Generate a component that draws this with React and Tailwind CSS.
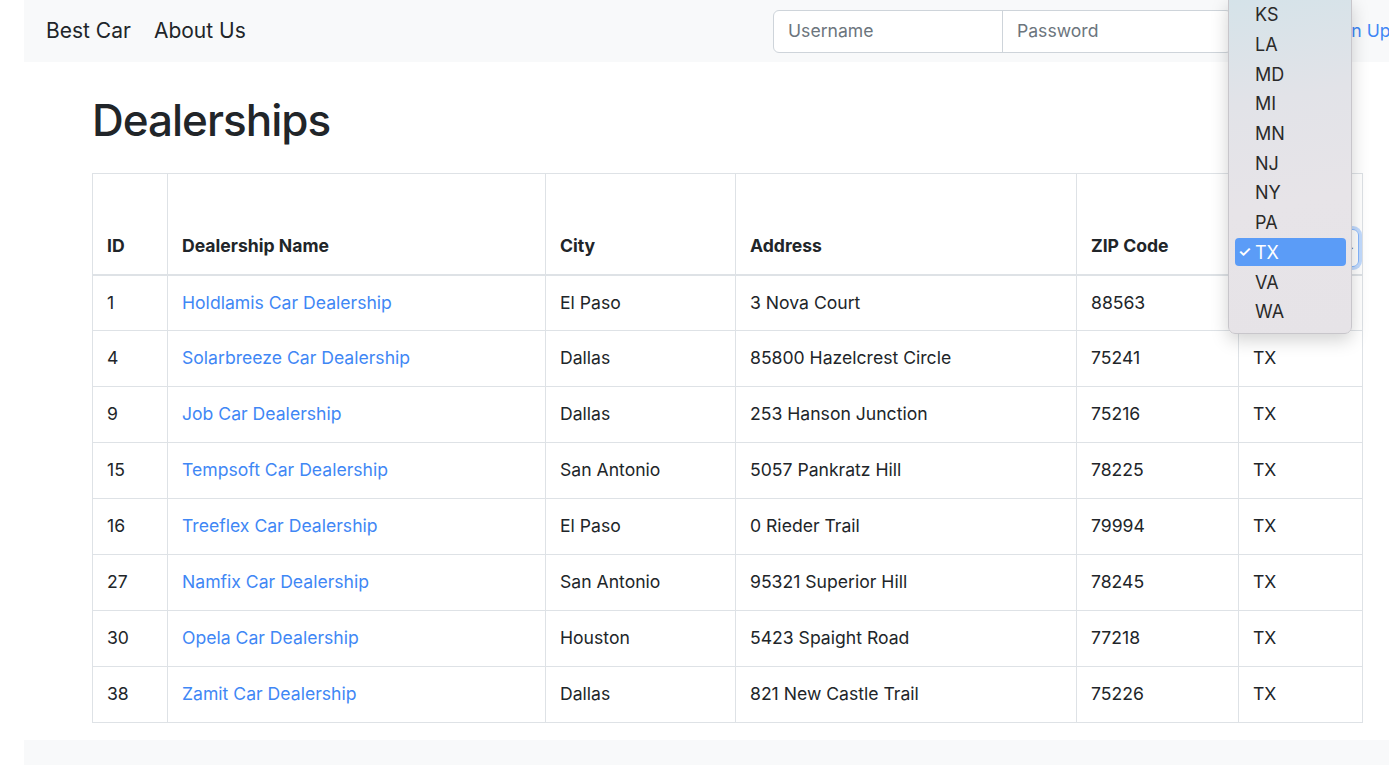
import React from "react";

const rows = [
  ["1", "Holdlamis Car Dealership", "El Paso", "3 Nova Court", "88563", "TX"],
  ["4", "Solarbreeze Car Dealership", "Dallas", "85800 Hazelcrest Circle", "75241", "TX"],
  ["9", "Job Car Dealership", "Dallas", "253 Hanson Junction", "75216", "TX"],
  ["15", "Tempsoft Car Dealership", "San Antonio", "5057 Pankratz Hill", "78225", "TX"],
  ["16", "Treeflex Car Dealership", "El Paso", "0 Rieder Trail", "79994", "TX"],
  ["27", "Namfix Car Dealership", "San Antonio", "95321 Superior Hill", "78245", "TX"],
  ["30", "Opela Car Dealership", "Houston", "5423 Spaight Road", "77218", "TX"],
  ["38", "Zamit Car Dealership", "Dallas", "821 New Castle Trail", "75226", "TX"],
];

const states = ["KS", "LA", "MD", "MI", "MN", "NJ", "NY", "PA", "TX", "VA", "WA"];

const widths = ["w-[75px]", "w-[378px]", "w-[190px]", "w-[341px]", "w-[162px]", "w-[124px]"];

export default function App() {
  return (
    <div
      className="relative w-[1389px] h-[765px] overflow-hidden bg-white text-[#212529]"
      style={{ fontFamily: "Inter, 'Liberation Sans', sans-serif" }}
    >
      {/* Navbar */}
      <div className="ml-6 h-[62px] w-[1500px] bg-[#f8f9fa] flex items-center whitespace-nowrap">
        <div className="w-[749px] shrink-0 pl-[22px] flex items-center gap-[23px] text-[21px] text-[#212529]">
          <span>Best Car</span>
          <span>About Us</span>
        </div>
        <div className="flex shrink-0 h-[43px] rounded-[6px] border border-[#ced4da] bg-white text-[17.6px] text-[#6c757d]">
          <div className="w-[229px] flex items-center pl-[14px] border-r border-[#ced4da]">Username</div>
          <div className="w-[228px] flex items-center pl-[14px]">Password</div>
        </div>
        <span className="ml-[93px] shrink-0 text-[17.6px] text-[#3f87f5]">Sign Up</span>
      </div>

      {/* Main */}
      <div className="ml-[92px] w-[1270px]">
        <h1 className="mt-[31px] mb-[25px] text-[44px] leading-[55px] tracking-[-1px] font-medium text-[#212529]">
          Dealerships
        </h1>
        <table className="w-[1270px] border-collapse border border-[#dee2e6] text-[17.6px] table-fixed">
          <thead>
            <tr className="h-[101px] border-b-2 border-[#dee2e6]">
              {["ID", "Dealership Name", "City", "Address", "ZIP Code"].map((h, i) => (
                <th
                  key={h}
                  className={`${widths[i]} align-bottom text-left font-bold px-[14px] pb-[14px] border-r border-[#dee2e6]`}
                >
                  {h}
                </th>
              ))}
              <th className={`${widths[5]} align-bottom text-left px-[12px] pb-[7px]`}>
                <div className="h-[38px] w-[108px] rounded-[6px] border border-[#86b7fe] shadow-[0_0_0_3px_rgba(13,110,253,0.25)] flex items-center justify-end pr-[4px] font-normal">
                  <span className="text-[10px] text-[#444]">⌄</span>
                </div>
              </th>
            </tr>
          </thead>
          <tbody>
            {rows.map((r) => (
              <tr key={r[0]} className="h-[56px] border-b border-[#dee2e6]">
                {r.map((c, i) => (
                  <td
                    key={i}
                    className={`px-[14px] border-r border-[#dee2e6] ${i === 1 ? "text-[#3f87f5]" : ""}`}
                  >
                    {c}
                  </td>
                ))}
              </tr>
            ))}
          </tbody>
        </table>
      </div>

      {/* Footer */}
      <div className="ml-6 mt-[17px] h-[40px] bg-[#f8f9fa]"></div>

      {/* Open select dropdown */}
      <div
        className="absolute top-[-1px] left-[1228px] w-[124px] pb-[6px] rounded-b-[7px] border border-[#c8c6cb] shadow-[0_6px_18px_rgba(0,0,0,0.18)] text-[18px] text-[#2a2a2a]"
        style={{ background: "linear-gradient(170deg, #d5e3e9 0%, #e2e3e8 30%, #e7e4e8 60%, #e6e3e7 100%)" }}
      >
        {states.map((s) =>
          s === "TX" ? (
            <div key={s} className="h-[29.7px] flex items-center">
              <div className="ml-[6px] mr-[5px] h-[28px] flex-1 rounded-[4px] bg-[#5b9cf7] text-white flex items-center">
                <span className="w-[20px] pl-[3px] text-[15px] font-semibold">✓</span>
                <span>{s}</span>
              </div>
            </div>
          ) : (
            <div key={s} className="h-[29.7px] flex items-center pl-[26px]">
              {s}
            </div>
          )
        )}
      </div>
    </div>
  );
}
